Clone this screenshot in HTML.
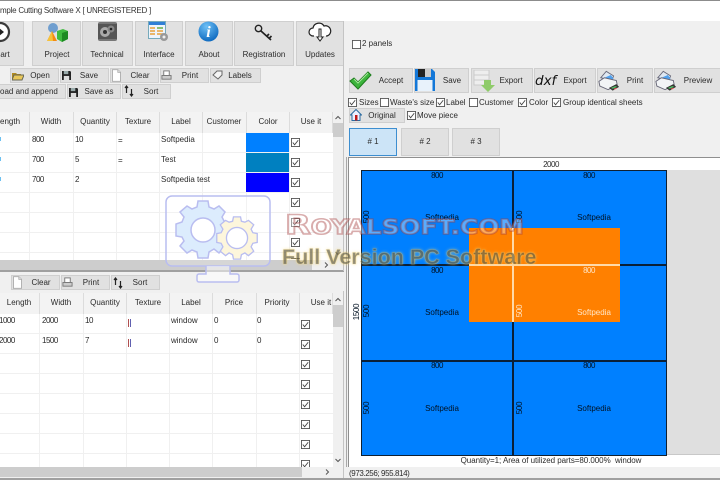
<!DOCTYPE html>
<html><head><meta charset="utf-8"><style>
*{box-sizing:border-box}
html,body{margin:0;padding:0;width:720px;height:480px;overflow:hidden;background:#f0f0f0}
body{position:relative;font:8px "Liberation Sans",sans-serif;color:#2b2b2b}
#r{position:absolute;left:0;top:0;width:720px;height:480px;overflow:hidden;filter:blur(.3px)}
#r div,#r span,#r svg{position:absolute}
.t{white-space:nowrap;line-height:12px}
.m{white-space:nowrap;line-height:12px;transform:translateX(-50%)}
.n{letter-spacing:-.5px}
.b{background:#e1e1e1;border:1px solid #cfcfcf}
.h{background:#f3f3f3;border-right:1px solid #dcdcdc;height:21px;top:0}
.rt{white-space:nowrap;line-height:10px;letter-spacing:-.3px;transform:translate(-50%,-50%) rotate(-90deg);color:#012}
.k{color:#012}
.w{color:#ffe6c8}
</style></head><body><div id="r">
<svg width="0" height="0"><defs><symbol id="ck" viewBox="0 0 10 10"><rect x=".5" y=".5" width="9" height="9" fill="#fff" stroke="#555"/><path d="M2 5l2 2.500L8 2.500" fill="none" stroke="#444" stroke-width="1"/></symbol><symbol id="un" viewBox="0 0 10 10"><rect x=".5" y=".5" width="9" height="9" fill="#fff" stroke="#555"/></symbol>
<symbol id="floppy" viewBox="0 0 10 10"><path d="M0 0h9l1 1v9H0z" fill="#222"/><rect x="2" y="0" width="5" height="3.500" fill="#9aa"/><rect x="2" y="5.500" width="6" height="4.500" fill="#ddd"/></symbol>
<symbol id="doc" viewBox="0 0 10 14"><path d="M.5.5h6l3 3v10H.5z" fill="#fff" stroke="#aaa"/><path d="M6.500.5v3h3" fill="#eee" stroke="#aaa"/></symbol>
<symbol id="pr" viewBox="0 0 12 12"><rect x="3" y="1" width="6" height="5" fill="#fff" stroke="#777"/><rect x="1" y="6" width="10" height="4" fill="#ccc" stroke="#777"/></symbol>
<symbol id="srt" viewBox="0 0 10 12"><path d="M2.500 8V1M1 3l1.500-2L4 3M7.500 4v7M6 9l1.500 2L9 9" fill="none" stroke="#222" stroke-width="1.200"/></symbol>
<symbol id="bpr" viewBox="0 0 24 24"><path d="M3 9l6-7 8 5-2 5z" fill="#dfe8f2" stroke="#667"/><path d="M7 9l7-3 3 4-7 3z" fill="#4fa0ee"/><path d="M1 13l6-4 13 3 1 5-10 5-9-4z" fill="#f2f4f6" stroke="#667"/><path d="M12 20l8-4 3 3-7 4z" fill="#333"/><path d="M14 20l5-2 2 1-5 2z" fill="#5b6"/><path d="M17 21l3-1 1 .5-3 1.500z" fill="#e55"/></symbol></defs></svg>

<!-- title -->
<div style="left:0;top:0;width:720px;height:21px;background:#fff;border-top:1px solid #8c8c8c"></div>
<div class="t" style="left:0;top:5px;letter-spacing:-.25px;color:#333">mple Cutting Software X [ UNREGISTERED ]</div>

<!-- main toolbar -->
<div class="b" style="left:-10px;top:21px;width:34px;height:45px"></div>
<div class="b" style="left:32px;top:21px;width:49px;height:45px"></div>
<div class="b" style="left:82px;top:21px;width:51px;height:45px"></div>
<div class="b" style="left:135px;top:21px;width:48px;height:45px"></div>
<div class="b" style="left:185px;top:21px;width:48px;height:45px"></div>
<div class="b" style="left:234px;top:21px;width:60px;height:45px"></div>
<div class="b" style="left:296px;top:21px;width:48px;height:45px"></div>
<div class="m" style="left:5px;top:49px">art</div>
<div class="m" style="left:57px;top:49px">Project</div>
<div class="m" style="left:107px;top:49px">Technical</div>
<div class="m" style="left:159px;top:49px">Interface</div>
<div class="m" style="left:209px;top:49px">About</div>
<div class="m" style="left:264px;top:49px">Registration</div>
<div class="m" style="left:320px;top:49px">Updates</div>
<svg style="left:-10px;top:21px" width="22" height="22" viewBox="0 0 22 22"><circle cx="10" cy="11" r="9" fill="#fff" stroke="#3a3a3a" stroke-width="2.200"/><path d="M9 7l5 4-5 4z" fill="#222"/></svg>
<svg style="left:45px;top:22px" width="24" height="21" viewBox="0 0 24 21"><circle cx="8" cy="6" r="5" fill="#6f9ecf"/><path d="M2 19L7 9l5 10z" fill="#f58a12"/><path d="M2 19L7 9l1 10z" fill="#f6c23a"/><path d="M12 9l6-2 5 2v8l-6 3-5-3z" fill="#3fbb3f"/><path d="M17 11l6-2v8l-6 3z" fill="#1d8a22"/></svg>
<svg style="left:98px;top:22px" width="19" height="19" viewBox="0 0 19 19"><rect width="19" height="19" rx="2" fill="#555"/><circle cx="7" cy="10" r="5" fill="#aaa"/><circle cx="7" cy="10" r="2" fill="#333"/><circle cx="13" cy="7" r="3.500" fill="#888"/><circle cx="13" cy="7" r="1.300" fill="#222"/><path d="M0 1h19M0 18h19" stroke="#999"/></svg>
<svg style="left:148px;top:20px" width="21" height="22" viewBox="0 0 21 22"><rect x=".5" y="1.500" width="17" height="17" fill="#eef4fb" stroke="#7ab"/><rect x="1" y="2" width="16" height="3" fill="#2f7fd6"/><path d="M2 8h5M9 8h6M2 11h5M9 11h6M2 14h5M9 14h6" stroke="#e9a23b" stroke-width="1.500"/><path d="M9 8h6" stroke="#6b6" stroke-width="1.500"/><circle cx="16" cy="17" r="4" fill="#999"/><circle cx="16" cy="17" r="1.500" fill="#eee"/></svg>
<svg style="left:198px;top:21px" width="21" height="21" viewBox="0 0 21 21"><defs><radialGradient id="ab" cx=".4" cy=".25" r=".8"><stop offset="0" stop-color="#6ec0f6"/><stop offset="1" stop-color="#0a66bd"/></radialGradient></defs><circle cx="10.500" cy="10.500" r="10" fill="url(#ab)"/><text x="10.500" y="16" text-anchor="middle" font-family="Liberation Serif,serif" font-style="italic" font-weight="bold" font-size="16" fill="#fff">i</text></svg>
<svg style="left:254px;top:24px" width="20" height="18" viewBox="0 0 20 18"><circle cx="4.500" cy="4.500" r="3.200" fill="none" stroke="#222" stroke-width="1.400"/><path d="M7 7l10 9M13 12l2-2M15.500 14l2-2" stroke="#222" stroke-width="1.700" fill="none"/></svg>
<svg style="left:308px;top:21px" width="24" height="22" viewBox="0 0 24 22"><path d="M6 15H5a4 4 0 0 1 0-8 6 6 0 0 1 11-2 5 5 0 0 1 3 10h-1" fill="#fff" stroke="#222" stroke-width="1.200"/><path d="M11 8h2v8h2l-3 4-3-4h2z" fill="#fff" stroke="#222"/></svg>

<!-- row buttons -->
<div class="b" style="left:10px;top:68px;width:49px;height:15px"></div><div class="b" style="left:60px;top:68px;width:49px;height:15px"></div><div class="b" style="left:110px;top:68px;width:49px;height:15px"></div><div class="b" style="left:160px;top:68px;width:49px;height:15px"></div><div class="b" style="left:210px;top:68px;width:51px;height:15px"></div>
<div class="b" style="left:-5px;top:84px;width:71px;height:15px"></div><div class="b" style="left:67px;top:84px;width:54px;height:15px"></div><div class="b" style="left:122px;top:84px;width:49px;height:15px"></div>
<div class="m" style="left:40px;top:70px">Open</div><div class="m" style="left:89px;top:70px">Save</div><div class="m" style="left:140px;top:70px">Clear</div><div class="m" style="left:190px;top:70px">Print</div><div class="m" style="left:240px;top:70px">Labels</div>
<div class="t" style="left:0;top:86px">oad and append</div><div class="m" style="left:99px;top:86px">Save as</div><div class="m" style="left:151px;top:86px">Sort</div>
<svg style="left:12px;top:70px" width="12" height="11" viewBox="0 0 12 11"><path d="M0 3h4l1 1h4v6H0z" fill="#b08a20"/><path d="M2 5h10l-2 5H0z" fill="#e8c75a" stroke="#665"/></svg>
<svg style="left:62px;top:71px" width="9" height="9"><use href="#floppy"/></svg><svg style="left:69px;top:88px" width="9" height="9"><use href="#floppy"/></svg>
<svg style="left:112px;top:69px" width="9" height="13"><use href="#doc"/></svg>
<svg style="left:161px;top:70px" width="11" height="11"><use href="#pr"/></svg>
<svg style="left:212px;top:70px" width="11" height="10" viewBox="0 0 11 10"><path d="M1 5l4-4h5v4l-4 4z" fill="#f4f4f4" stroke="#666"/></svg>
<svg style="left:124px;top:85px" width="10" height="12"><use href="#srt"/></svg>

<!-- grid 1 -->
<div style="left:0;top:133px;width:333px;height:127px;background:#fff;background-image:repeating-linear-gradient(to bottom,transparent 0 19px,#f0f0f0 19px 20px)"></div>
<div style="left:29px;top:133px;width:1px;height:127px;background:#f0f0f0"></div><div style="left:73px;top:133px;width:1px;height:127px;background:#f0f0f0"></div><div style="left:116px;top:133px;width:1px;height:127px;background:#f0f0f0"></div><div style="left:159px;top:133px;width:1px;height:127px;background:#f0f0f0"></div><div style="left:202px;top:133px;width:1px;height:127px;background:#f0f0f0"></div><div style="left:246px;top:133px;width:1px;height:127px;background:#f0f0f0"></div><div style="left:289px;top:133px;width:1px;height:127px;background:#f0f0f0"></div>
<div class="h" style="left:0;top:112px;width:30px"></div><div class="h" style="left:30px;top:112px;width:44px"></div><div class="h" style="left:74px;top:112px;width:43px"></div><div class="h" style="left:117px;top:112px;width:43px"></div><div class="h" style="left:160px;top:112px;width:43px"></div><div class="h" style="left:203px;top:112px;width:44px"></div><div class="h" style="left:247px;top:112px;width:43px"></div><div class="h" style="left:290px;top:112px;width:43px"></div>
<div class="t" style="left:0;top:116px">ength</div><div class="m" style="left:51px;top:116px">Width</div><div class="m" style="left:95px;top:116px">Quantity</div><div class="m" style="left:138px;top:116px">Texture</div><div class="m" style="left:181px;top:116px">Label</div><div class="m" style="left:224px;top:116px">Customer</div><div class="m" style="left:268px;top:116px">Color</div><div class="m" style="left:311px;top:116px">Use it</div>
<div style="left:0;top:137px;width:1px;height:4px;background:#6cc0f0"></div><div style="left:0;top:157px;width:1px;height:4px;background:#6cc0f0"></div><div style="left:0;top:177px;width:1px;height:4px;background:#6cc0f0"></div>
<div class="t n" style="left:32px;top:134px">800</div><div class="t n" style="left:75px;top:134px">10</div><div class="t" style="left:118px;top:135px">=</div><div class="t" style="left:161px;top:134px">Softpedia</div>
<div class="t n" style="left:32px;top:154px">700</div><div class="t n" style="left:75px;top:154px">5</div><div class="t" style="left:118px;top:155px">=</div><div class="t" style="left:161px;top:154px">Test</div>
<div class="t n" style="left:32px;top:174px">700</div><div class="t n" style="left:75px;top:174px">2</div><div class="t" style="left:161px;top:174px">Softpedia test</div>
<div style="left:246px;top:133px;width:43px;height:19px;background:#0080ff"></div><div style="left:246px;top:153px;width:43px;height:19px;background:#0080c0"></div><div style="left:246px;top:173px;width:43px;height:19px;background:#0000ff"></div>
<svg style="left:291px;top:138px" width="9" height="9"><use href="#ck"/></svg><svg style="left:291px;top:158px" width="9" height="9"><use href="#ck"/></svg><svg style="left:291px;top:178px" width="9" height="9"><use href="#ck"/></svg><svg style="left:291px;top:198px" width="9" height="9"><use href="#ck"/></svg><svg style="left:291px;top:218px" width="9" height="9"><use href="#ck"/></svg><svg style="left:291px;top:238px" width="9" height="9"><use href="#ck"/></svg>
<div style="left:291px;top:258px;width:9px;height:1px;background:#555"></div>
<div style="left:333px;top:112px;width:10px;height:148px;background:#f0f0f0"></div><div style="left:333px;top:123px;width:10px;height:14px;background:#cdcdcd"></div>
<svg style="left:335px;top:115px" width="6" height="5"><path d="M.5 4L3 1.500 5.500 4" fill="none" stroke="#555"/></svg><svg style="left:335px;top:251px" width="6" height="5"><path d="M.5 1L3 3.500 5.500 1" fill="none" stroke="#555"/></svg>
<div style="left:0;top:260px;width:312px;height:10px;background:#cdcdcd"></div><div style="left:312px;top:260px;width:31px;height:10px;background:#f0f0f0"></div>
<svg style="left:324px;top:262px" width="5" height="6"><path d="M1 .5L3.500 3 1 5.500" fill="none" stroke="#555"/></svg>
<div style="left:0;top:270px;width:344px;height:2px;background:#a0a0a0"></div><div style="left:343px;top:21px;width:1px;height:250px;background:#c4c4c4"></div>

<!-- grid 1 buttons -->
<div class="b" style="left:11px;top:275px;width:49px;height:15px"></div><div class="b" style="left:61px;top:275px;width:49px;height:15px"></div><div class="b" style="left:111px;top:275px;width:49px;height:15px"></div>
<div class="m" style="left:41px;top:277px">Clear</div><div class="m" style="left:91px;top:277px">Print</div><div class="m" style="left:140px;top:277px">Sort</div>
<svg style="left:13px;top:276px" width="9" height="13"><use href="#doc"/></svg><svg style="left:62px;top:277px" width="11" height="11"><use href="#pr"/></svg><svg style="left:113px;top:277px" width="10" height="12"><use href="#srt"/></svg>

<!-- grid 2 -->
<div style="left:0;top:314px;width:333px;height:153px;background:#fff;background-image:repeating-linear-gradient(to bottom,transparent 0 19px,#f0f0f0 19px 20px)"></div>
<div style="left:39px;top:314px;width:1px;height:153px;background:#f0f0f0"></div><div style="left:83px;top:314px;width:1px;height:153px;background:#f0f0f0"></div><div style="left:126px;top:314px;width:1px;height:153px;background:#f0f0f0"></div><div style="left:169px;top:314px;width:1px;height:153px;background:#f0f0f0"></div><div style="left:212px;top:314px;width:1px;height:153px;background:#f0f0f0"></div><div style="left:256px;top:314px;width:1px;height:153px;background:#f0f0f0"></div><div style="left:299px;top:314px;width:1px;height:153px;background:#f0f0f0"></div>
<div class="h" style="left:0;top:293px;width:40px"></div><div class="h" style="left:40px;top:293px;width:44px"></div><div class="h" style="left:84px;top:293px;width:43px"></div><div class="h" style="left:127px;top:293px;width:43px"></div><div class="h" style="left:170px;top:293px;width:43px"></div><div class="h" style="left:213px;top:293px;width:44px"></div><div class="h" style="left:257px;top:293px;width:43px"></div><div class="h" style="left:300px;top:293px;width:33px"></div>
<div class="m" style="left:19px;top:297px">Length</div><div class="m" style="left:61px;top:297px">Width</div><div class="m" style="left:105px;top:297px">Quantity</div><div class="m" style="left:148px;top:297px">Texture</div><div class="m" style="left:191px;top:297px">Label</div><div class="m" style="left:234px;top:297px">Price</div><div class="m" style="left:277px;top:297px">Priority</div><div class="m" style="left:321px;top:297px">Use it</div>
<div class="t n" style="left:-1px;top:315px">1000</div><div class="t n" style="left:42px;top:315px">2000</div><div class="t n" style="left:85px;top:315px">10</div><div class="t" style="left:171px;top:315px">window</div><div class="t" style="left:214px;top:315px">0</div><div class="t" style="left:257px;top:315px">0</div>
<div class="t n" style="left:-1px;top:335px">2000</div><div class="t n" style="left:42px;top:335px">1500</div><div class="t n" style="left:85px;top:335px">7</div><div class="t" style="left:171px;top:335px">window</div><div class="t" style="left:214px;top:335px">0</div><div class="t" style="left:257px;top:335px">0</div>
<div style="left:128px;top:319px;width:1px;height:8px;background:#b05050"></div><div style="left:130px;top:319px;width:1px;height:8px;background:#6060b0"></div><div style="left:128px;top:339px;width:1px;height:8px;background:#b05050"></div><div style="left:130px;top:339px;width:1px;height:8px;background:#6060b0"></div>
<svg style="left:301px;top:320px" width="9" height="9"><use href="#ck"/></svg><svg style="left:301px;top:340px" width="9" height="9"><use href="#ck"/></svg><svg style="left:301px;top:360px" width="9" height="9"><use href="#ck"/></svg><svg style="left:301px;top:380px" width="9" height="9"><use href="#ck"/></svg><svg style="left:301px;top:400px" width="9" height="9"><use href="#ck"/></svg><svg style="left:301px;top:420px" width="9" height="9"><use href="#ck"/></svg><svg style="left:301px;top:440px" width="9" height="9"><use href="#ck"/></svg>
<div style="left:301px;top:460px;width:9px;height:7px;overflow:hidden"><svg style="left:0;top:0" width="9" height="9"><use href="#ck"/></svg></div>
<div style="left:333px;top:293px;width:10px;height:174px;background:#f0f0f0"></div><div style="left:333px;top:305px;width:10px;height:22px;background:#cdcdcd"></div>
<svg style="left:335px;top:297px" width="6" height="5"><path d="M.5 4L3 1.500 5.500 4" fill="none" stroke="#555"/></svg><svg style="left:335px;top:458px" width="6" height="5"><path d="M.5 1L3 3.500 5.500 1" fill="none" stroke="#555"/></svg>
<div style="left:0;top:467px;width:302px;height:10px;background:#cdcdcd"></div><div style="left:302px;top:467px;width:41px;height:10px;background:#f0f0f0"></div>
<svg style="left:325px;top:469px" width="5" height="6"><path d="M1 .5L3.500 3 1 5.500" fill="none" stroke="#555"/></svg>
<div style="left:0;top:478px;width:720px;height:2px;background:#a0a0a0"></div><div style="left:343px;top:291px;width:1px;height:187px;background:#c4c4c4"></div>

<!-- right panel -->
<svg style="left:352px;top:40px" width="9" height="9"><use href="#un"/></svg><div class="t" style="left:362px;top:38px">2 panels</div>
<div class="b" style="left:349px;top:68px;width:64px;height:25px"></div><div class="b" style="left:414px;top:68px;width:55px;height:25px"></div><div class="b" style="left:471px;top:68px;width:62px;height:25px"></div><div class="b" style="left:534px;top:68px;width:62px;height:25px"></div><div class="b" style="left:597px;top:68px;width:56px;height:25px"></div><div class="b" style="left:654px;top:68px;width:70px;height:25px"></div>
<div class="m" style="left:391px;top:75px">Accept</div><div class="m" style="left:452px;top:75px">Save</div><div class="m" style="left:511px;top:75px">Export</div><div class="m" style="left:575px;top:75px">Export</div><div class="m" style="left:635px;top:75px">Print</div><div class="m" style="left:698px;top:75px">Preview</div>
<svg style="left:349px;top:71px" width="23" height="19" viewBox="0 0 23 19"><path d="M1 10l4-3 4 4L19 1l3 3L9 18z" fill="#3cb43c" stroke="#1c7c1c"/><path d="M5 8l4 4L19 2" fill="none" stroke="#a5e89a"/></svg>
<svg style="left:415px;top:69px" width="20" height="22" viewBox="0 0 20 22"><path d="M0 0h17l3 3v19H0z" fill="#1478d8"/><rect x="3" y="0" width="13" height="8" fill="#ccc"/><rect x="3" y="0" width="7" height="8" fill="#222"/><rect x="2.500" y="11" width="15" height="11" fill="#e8f2fb"/></svg>
<svg style="left:473px;top:70px" width="22" height="22" viewBox="0 0 22 22"><rect x="1" y="0" width="15" height="5" fill="#eee" stroke="#ccc"/><rect x="1" y="5" width="15" height="5" fill="#eee" stroke="#ccc"/><rect x="1" y="10" width="15" height="5" fill="#eee" stroke="#ccc"/><path d="M11 10h7v5h4l-7 7-7-7h3z" fill="#8fcb6a"/></svg>
<div class="t" style="left:535px;top:73px;font:italic 13.500px/16px 'DejaVu Sans',sans-serif;color:#111;letter-spacing:0">dxf</div>
<svg style="left:598px;top:69px" width="22" height="23"><use href="#bpr"/></svg><svg style="left:655px;top:69px" width="22" height="23"><use href="#bpr"/></svg>

<svg style="left:348px;top:98px" width="9" height="9"><use href="#ck"/></svg><div class="t" style="left:359px;top:97px">Sizes</div>
<svg style="left:380px;top:98px" width="9" height="9"><use href="#un"/></svg><div class="t" style="left:390px;top:97px">Waste's size</div>
<svg style="left:436px;top:98px" width="9" height="9"><use href="#ck"/></svg><div class="t" style="left:446px;top:97px">Label</div>
<svg style="left:469px;top:98px" width="9" height="9"><use href="#un"/></svg><div class="t" style="left:479px;top:97px">Customer</div>
<svg style="left:518px;top:98px" width="9" height="9"><use href="#ck"/></svg><div class="t" style="left:529px;top:97px">Color</div>
<svg style="left:552px;top:98px" width="9" height="9"><use href="#ck"/></svg><div class="t" style="left:563px;top:97px">Group identical sheets</div>
<div class="b" style="left:349px;top:108px;width:56px;height:15px"></div>
<svg style="left:350px;top:109px" width="12" height="12" viewBox="0 0 12 12"><path d="M6 .5L.5 6H2v5.500h8V6h1.500z" fill="#eef" stroke="#2a6aa0"/><rect x="5" y="6" width="2.500" height="5.500" fill="#c01818"/></svg>
<div class="m" style="left:382px;top:110px">Original</div>
<svg style="left:407px;top:111px" width="9" height="9"><use href="#ck"/></svg><div class="t" style="left:417px;top:110px">Move piece</div>

<div style="left:349px;top:128px;width:48px;height:28px;background:#cce4f7;border:1px solid #3d8ed0"></div><div class="b" style="left:401px;top:128px;width:48px;height:28px"></div><div class="b" style="left:452px;top:128px;width:48px;height:28px"></div>
<div class="m" style="left:373px;top:136px">#&nbsp;1</div><div class="m" style="left:425px;top:136px">#&nbsp;2</div><div class="m" style="left:476px;top:136px">#&nbsp;3</div>

<!-- canvas -->
<div style="left:346px;top:157px;width:1px;height:310px;background:#a8a8a8"></div>
<div style="left:348px;top:157px;width:372px;height:310px;background:#fff;border-top:1px solid #8f8f8f;border-left:1px solid #8f8f8f"></div>
<div style="left:666px;top:170px;width:54px;height:285px;background:#dfdfdf;border-bottom:1px solid #c8c8c8"></div>
<div style="left:361px;top:170px;width:306px;height:286px;background:#0080ff;border:1px solid #102030"></div>
<div style="left:512px;top:170px;width:2px;height:286px;background:#0a2038"></div>
<div style="left:361px;top:264px;width:306px;height:2px;background:#0a2038"></div>
<div style="left:361px;top:360px;width:306px;height:1.500px;background:#0a2038"></div>
<div class="m n" style="left:551px;top:159px">2000</div>
<div class="rt" style="left:357px;top:312px">1500</div>
<div class="m k n" style="left:437px;top:170px">800</div><div class="m k n" style="left:589px;top:170px">800</div><div class="m k" style="left:442px;top:212px">Softpedia</div><div class="m k" style="left:594px;top:212px">Softpedia</div>
<div class="rt" style="left:367px;top:217px">500</div><div class="rt" style="left:520px;top:217px">500</div>
<div class="m k n" style="left:437px;top:265px">800</div><div class="m k" style="left:442px;top:307px">Softpedia</div><div class="rt" style="left:367px;top:311px">500</div>
<div class="m k n" style="left:437px;top:360px">800</div><div class="m k n" style="left:589px;top:360px">800</div><div class="m k" style="left:442px;top:403px">Softpedia</div><div class="m k" style="left:594px;top:403px">Softpedia</div>
<div class="rt" style="left:367px;top:408px">500</div><div class="rt" style="left:520px;top:408px">500</div>
<div style="left:469px;top:228px;width:151px;height:94px;background:#ff8000"></div>
<div style="left:512px;top:228px;width:2px;height:94px;background:#ffd9a8"></div>
<div style="left:469px;top:264px;width:151px;height:2px;background:#ffd9a8"></div>
<div class="m w n" style="left:589px;top:265px">800</div><div class="m w" style="left:594px;top:307px">Softpedia</div><div class="rt w" style="left:520px;top:311px;color:#ffe6c8">500</div>
<div class="m" style="left:551px;top:455px;white-space:pre;letter-spacing:-.05px">Quantity=1; Area of utilized parts=80.000%  window</div>
<div class="t" style="left:349px;top:468px;letter-spacing:-.4px">(973.256; 955.814)</div>

<!-- watermark -->
<svg style="left:164px;top:194px" width="110" height="92" viewBox="0 0 110 92" fill="none" stroke="#b9bdf0" stroke-width="1.500"><path d="M8 2h92a6 6 0 0 1 6 6v58a6 6 0 0 1-6 6H8a6 6 0 0 1-6-6V8a6 6 0 0 1 6-6z" fill="rgba(255,255,255,.18)"/><path d="M42 72v8h-7a2 2 0 0 0-2 2v4a2 2 0 0 0 2 2h38a2 2 0 0 0 2-2v-4a2 2 0 0 0-2-2h-7v-8" fill="rgba(255,255,255,.5)"/>
<g transform="translate(-2 -4)"><path d="M36 11h10l1 6 5 2 5-3 6 6-3 5 2 4 6 2v12l-6 1-2 5 3 5-6 7-5-4-5 3-1 6H36l-1-6-5-2-5 3-7-7 4-5-2-4-6-1V34l6-2 2-5-4-5 7-6 5 3 5-2z" fill="#dcecfd"/><circle cx="41" cy="40" r="12" fill="#fff"/></g>
<g transform="translate(73 44) scale(.88) translate(-70 -54)"><path d="M66 30h8l1 5 4 1 4-2 6 5-3 5 2 4 5 1v10l-5 1-2 4 3 5-6 5-4-3-4 2-1 5h-8l-1-5-4-2-4 3-6-5 3-5-2-4-5-1V49l5-1 2-4-3-5 6-5 4 2 4-1z" fill="#fdf6dc"/><circle cx="70" cy="54" r="12" fill="#fff"/></g></svg>
<div class="t" style="left:285px;top:211px;font:bold 20px/30px 'DejaVu Sans',sans-serif;color:rgba(255,255,255,.35);-webkit-text-stroke:1.600px rgba(165,60,60,.42);transform-origin:left;transform:scaleX(1.24)"><i style="font-style:normal;font-size:27px">R</i>OYALSOFT.COM</div>
<div class="t" style="left:282px;top:244px;font:bold 21.500px/26px 'Liberation Sans',sans-serif;color:rgba(70,70,60,.58);-webkit-text-stroke:.8px rgba(245,215,120,.3);text-shadow:0 0 3px rgba(250,215,110,.7)">Full Version PC Software</div>
</div></body></html>
